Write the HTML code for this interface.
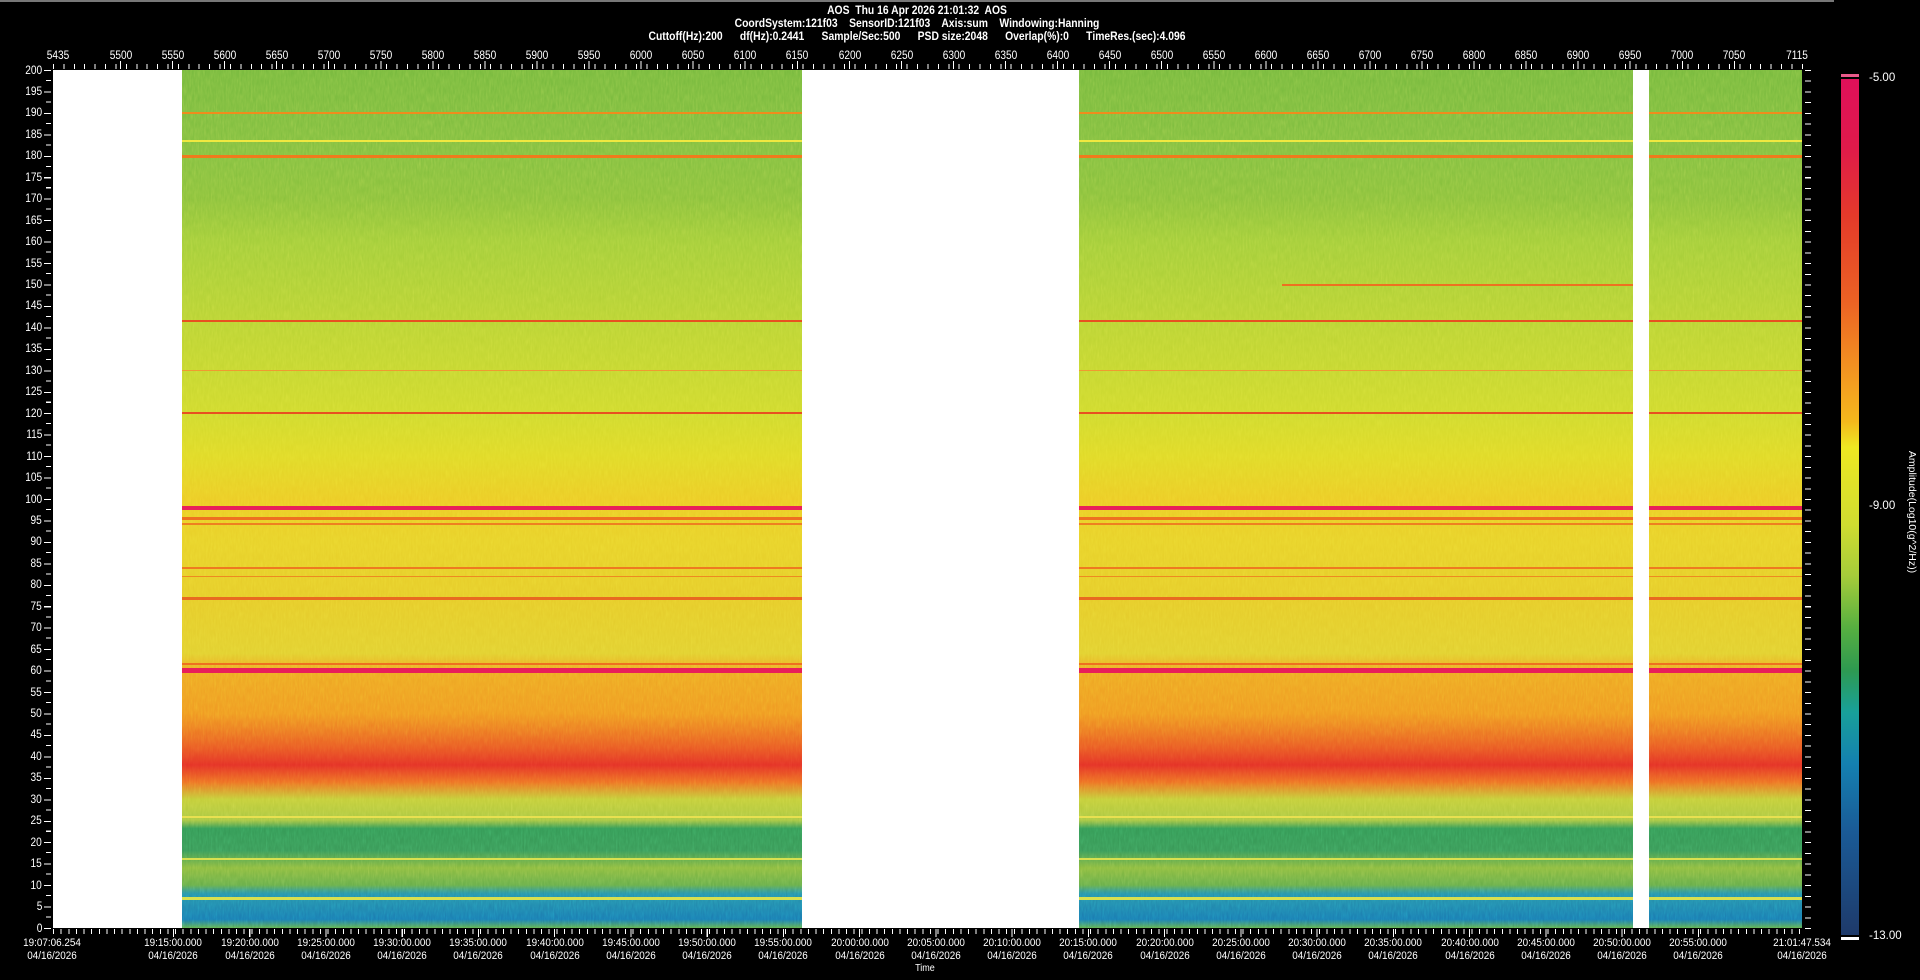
<!DOCTYPE html>
<html><head><meta charset="utf-8"><style>
*{margin:0;padding:0;box-sizing:border-box}
body{width:1920px;height:980px;background:#000;position:relative;overflow:hidden;font-family:"Liberation Sans",sans-serif;color:#fff}
.a{position:absolute}
.hd{position:absolute;left:0;width:1834px;text-align:center;font-weight:bold;font-size:11.5px;white-space:pre;transform:scaleX(0.9)}
.tx{position:absolute;top:50px;font-size:11.5px;transform:translateX(-50%) scaleX(.88);white-space:nowrap}
.yl{position:absolute;right:1878px;font-size:11.5px;transform:translateY(-50%) scaleX(.88);transform-origin:right center}
.bt{position:absolute;top:937px;font-size:11px;line-height:13px;text-align:center;transform:translateX(-50%) scaleX(.9);white-space:nowrap}
.ln{position:absolute;left:53px;width:1749px}
.w{position:absolute;top:70px;height:858px;background:#fff}
</style></head><body>
<div class="a" style="left:0;top:0;width:1834px;height:2px;background:#777"></div>
<div class="hd" style="top:5px">AOS  Thu 16 Apr 2026 21:01:32  AOS</div>
<div class="hd" style="top:18px">CoordSystem:121f03    SensorID:121f03    Axis:sum    Windowing:Hanning</div>
<div class="hd" style="top:31px">Cuttoff(Hz):200      df(Hz):0.2441      Sample/Sec:500      PSD size:2048      Overlap(%):0      TimeRes.(sec):4.096</div>

<div class="a" style="left:53px;top:64px;width:1750px;height:5px;background:repeating-linear-gradient(90deg,#fff 0 1px,transparent 1px 10.41px)"></div>
<div class="a" style="left:120px;top:61px;width:1640px;height:8px;background:repeating-linear-gradient(90deg,#fff 0 1px,transparent 1px 52.06px)"></div>
<div class="tx" style="left:58px">5435</div><div class="tx" style="left:121px">5500</div><div class="tx" style="left:173px">5550</div><div class="tx" style="left:225px">5600</div><div class="tx" style="left:277px">5650</div><div class="tx" style="left:329px">5700</div><div class="tx" style="left:381px">5750</div><div class="tx" style="left:433px">5800</div><div class="tx" style="left:485px">5850</div><div class="tx" style="left:537px">5900</div><div class="tx" style="left:589px">5950</div><div class="tx" style="left:641px">6000</div><div class="tx" style="left:693px">6050</div><div class="tx" style="left:745px">6100</div><div class="tx" style="left:797px">6150</div><div class="tx" style="left:850px">6200</div><div class="tx" style="left:902px">6250</div><div class="tx" style="left:954px">6300</div><div class="tx" style="left:1006px">6350</div><div class="tx" style="left:1058px">6400</div><div class="tx" style="left:1110px">6450</div><div class="tx" style="left:1162px">6500</div><div class="tx" style="left:1214px">6550</div><div class="tx" style="left:1266px">6600</div><div class="tx" style="left:1318px">6650</div><div class="tx" style="left:1370px">6700</div><div class="tx" style="left:1422px">6750</div><div class="tx" style="left:1474px">6800</div><div class="tx" style="left:1526px">6850</div><div class="tx" style="left:1578px">6900</div><div class="tx" style="left:1630px">6950</div><div class="tx" style="left:1682px">7000</div><div class="tx" style="left:1734px">7050</div><div class="tx" style="left:1797px">7115</div>

<div class="a" style="left:53px;top:70px;width:1749px;height:858px;background:linear-gradient(180deg,#78ba3e 0%,#84c040 10%,#8cc23c 15%,#a4ce3a 20%,#bcd434 30%,#d0da2e 40%,#e0da28 45%,#eccc26 50%,#e8d22a 55%,#e6cc2a 62%,#e2d030 68%,#eeaa24 70%,#f09a22 75%,#ea5a24 79%,#e43226 81%,#ee7024 83%,#c4ce3a 85%,#aac843 87.4%,#359a56 88.4%,#3a9a58 91%,#8cbc40 93%,#68ae4a 95%,#2894aa 96%,#1a7cb2 99%,#60b050 100%)"></div>
<svg class="a" style="left:53px;top:70px;opacity:.35;mix-blend-mode:overlay" width="1749" height="858"><filter id="n"><feTurbulence type="fractalNoise" baseFrequency="0.6 0.12" numOctaves="2" seed="3"/><feColorMatrix type="saturate" values="0"/></filter><rect width="1749" height="858" filter="url(#n)"/></svg>
<div class="ln" style="top:112px;height:2px;background:#f08c1c"></div>
<div class="ln" style="top:140px;height:2px;background:#f0e840"></div>
<div class="ln" style="top:155px;height:3px;background:#f07a1c"></div>
<div class="ln" style="top:320px;height:2px;background:#e85020"></div>
<div class="ln" style="top:370px;height:1px;background:#f09a30"></div>
<div class="ln" style="top:412px;height:2px;background:#e85020"></div>
<div class="ln" style="top:506px;height:4px;background:#e8205a"></div>
<div class="ln" style="top:517px;height:3px;background:#ee7020"></div>
<div class="ln" style="top:523px;height:2px;background:#ee8020"></div>
<div class="ln" style="top:567px;height:2px;background:#ee7a20"></div>
<div class="ln" style="top:576px;height:1px;background:#ee8a20"></div>
<div class="ln" style="top:597px;height:3px;background:#e86a20"></div>
<div class="ln" style="top:663px;height:2px;background:#ee7020"></div>
<div class="ln" style="top:668px;height:5px;background:#e81e5a"></div>
<div class="ln" style="top:816px;height:2px;background:#e8e050"></div>
<div class="ln" style="top:858px;height:2px;background:#d8e050"></div>
<div class="ln" style="top:897px;height:3px;background:#d8e050"></div>
<div class="a" style="left:1282px;top:284px;width:351px;height:2px;background:#ee7020"></div>
<div class="w" style="left:53px;width:129px"></div>
<div class="w" style="left:802px;width:277px"></div>
<div class="w" style="left:1633px;width:16px"></div>

<div class="a" style="left:44px;top:70px;width:7px;height:860px;background:repeating-linear-gradient(180deg,#fff 0 1px,transparent 1px 21.45px)"></div>
<div class="a" style="left:46px;top:80px;width:5px;height:850px;background:repeating-linear-gradient(180deg,#fff 0 1px,transparent 1px 21.45px)"></div>
<div class="a" style="left:1805px;top:70px;width:6px;height:860px;background:repeating-linear-gradient(180deg,#fff 0 1px,transparent 1px 10.725px)"></div>
<div class="yl" style="top:71px">200</div><div class="yl" style="top:92px">195</div><div class="yl" style="top:113px">190</div><div class="yl" style="top:135px">185</div><div class="yl" style="top:156px">180</div><div class="yl" style="top:178px">175</div><div class="yl" style="top:199px">170</div><div class="yl" style="top:221px">165</div><div class="yl" style="top:242px">160</div><div class="yl" style="top:264px">155</div><div class="yl" style="top:285px">150</div><div class="yl" style="top:306px">145</div><div class="yl" style="top:328px">140</div><div class="yl" style="top:349px">135</div><div class="yl" style="top:371px">130</div><div class="yl" style="top:392px">125</div><div class="yl" style="top:414px">120</div><div class="yl" style="top:435px">115</div><div class="yl" style="top:457px">110</div><div class="yl" style="top:478px">105</div><div class="yl" style="top:500px">100</div><div class="yl" style="top:521px">95</div><div class="yl" style="top:542px">90</div><div class="yl" style="top:564px">85</div><div class="yl" style="top:585px">80</div><div class="yl" style="top:607px">75</div><div class="yl" style="top:628px">70</div><div class="yl" style="top:650px">65</div><div class="yl" style="top:671px">60</div><div class="yl" style="top:693px">55</div><div class="yl" style="top:714px">50</div><div class="yl" style="top:735px">45</div><div class="yl" style="top:757px">40</div><div class="yl" style="top:778px">35</div><div class="yl" style="top:800px">30</div><div class="yl" style="top:821px">25</div><div class="yl" style="top:843px">20</div><div class="yl" style="top:864px">15</div><div class="yl" style="top:886px">10</div><div class="yl" style="top:907px">5</div><div class="yl" style="top:929px">0</div>

<div class="a" style="left:53px;top:929px;width:1750px;height:5px;background:repeating-linear-gradient(90deg,#fff 0 1px,transparent 1px 7.625px)"></div>
<div class="a" style="left:173px;top:929px;width:1600px;height:8px;background:repeating-linear-gradient(90deg,#fff 0 1px,transparent 1px 76.25px)"></div>
<div class="bt" style="left:52px">19:07:06.254<br>04/16/2026</div>
<div class="bt" style="left:173px">19:15:00.000<br>04/16/2026</div><div class="bt" style="left:250px">19:20:00.000<br>04/16/2026</div><div class="bt" style="left:326px">19:25:00.000<br>04/16/2026</div><div class="bt" style="left:402px">19:30:00.000<br>04/16/2026</div><div class="bt" style="left:478px">19:35:00.000<br>04/16/2026</div><div class="bt" style="left:555px">19:40:00.000<br>04/16/2026</div><div class="bt" style="left:631px">19:45:00.000<br>04/16/2026</div><div class="bt" style="left:707px">19:50:00.000<br>04/16/2026</div><div class="bt" style="left:783px">19:55:00.000<br>04/16/2026</div><div class="bt" style="left:860px">20:00:00.000<br>04/16/2026</div><div class="bt" style="left:936px">20:05:00.000<br>04/16/2026</div><div class="bt" style="left:1012px">20:10:00.000<br>04/16/2026</div><div class="bt" style="left:1088px">20:15:00.000<br>04/16/2026</div><div class="bt" style="left:1165px">20:20:00.000<br>04/16/2026</div><div class="bt" style="left:1241px">20:25:00.000<br>04/16/2026</div><div class="bt" style="left:1317px">20:30:00.000<br>04/16/2026</div><div class="bt" style="left:1393px">20:35:00.000<br>04/16/2026</div><div class="bt" style="left:1470px">20:40:00.000<br>04/16/2026</div><div class="bt" style="left:1546px">20:45:00.000<br>04/16/2026</div><div class="bt" style="left:1622px">20:50:00.000<br>04/16/2026</div><div class="bt" style="left:1698px">20:55:00.000<br>04/16/2026</div>
<div class="bt" style="left:1802px">21:01:47.534<br>04/16/2026</div>
<div class="a" style="left:914px;top:963px;font-size:10px;transform:scaleX(.9)">Time</div>

<div class="a" style="left:1841px;top:74px;width:18px;height:3px;background:#e85a8a"></div>
<div class="a" style="left:1841px;top:79px;width:18px;height:856px;background:linear-gradient(180deg,#e0105a 0%,#e01a4a 8%,#e43a2a 16%,#ec6224 26%,#f4a020 36%,#f4b81c 40%,#eee822 43%,#d0dc30 52%,#a6cc3a 58%,#58b040 64%,#2e9a50 69%,#18a09a 74%,#1480b0 80%,#1a5a96 88%,#1e3a6a 100%)"></div>
<div class="a" style="left:1841px;top:937px;width:18px;height:3px;background:#fff"></div>
<div class="a" style="left:1869px;top:72px;font-size:11.5px">-5.00</div>
<div class="a" style="left:1869px;top:500px;font-size:11.5px">-9.00</div>
<div class="a" style="left:1869px;top:930px;font-size:11.5px">-13.00</div>
<div class="a" style="left:1912px;top:512px;font-size:10.5px;white-space:nowrap;transform:translate(-50%,-50%) rotate(90deg)">Amplitude(Log10(g^2/Hz))</div>
</body></html>
